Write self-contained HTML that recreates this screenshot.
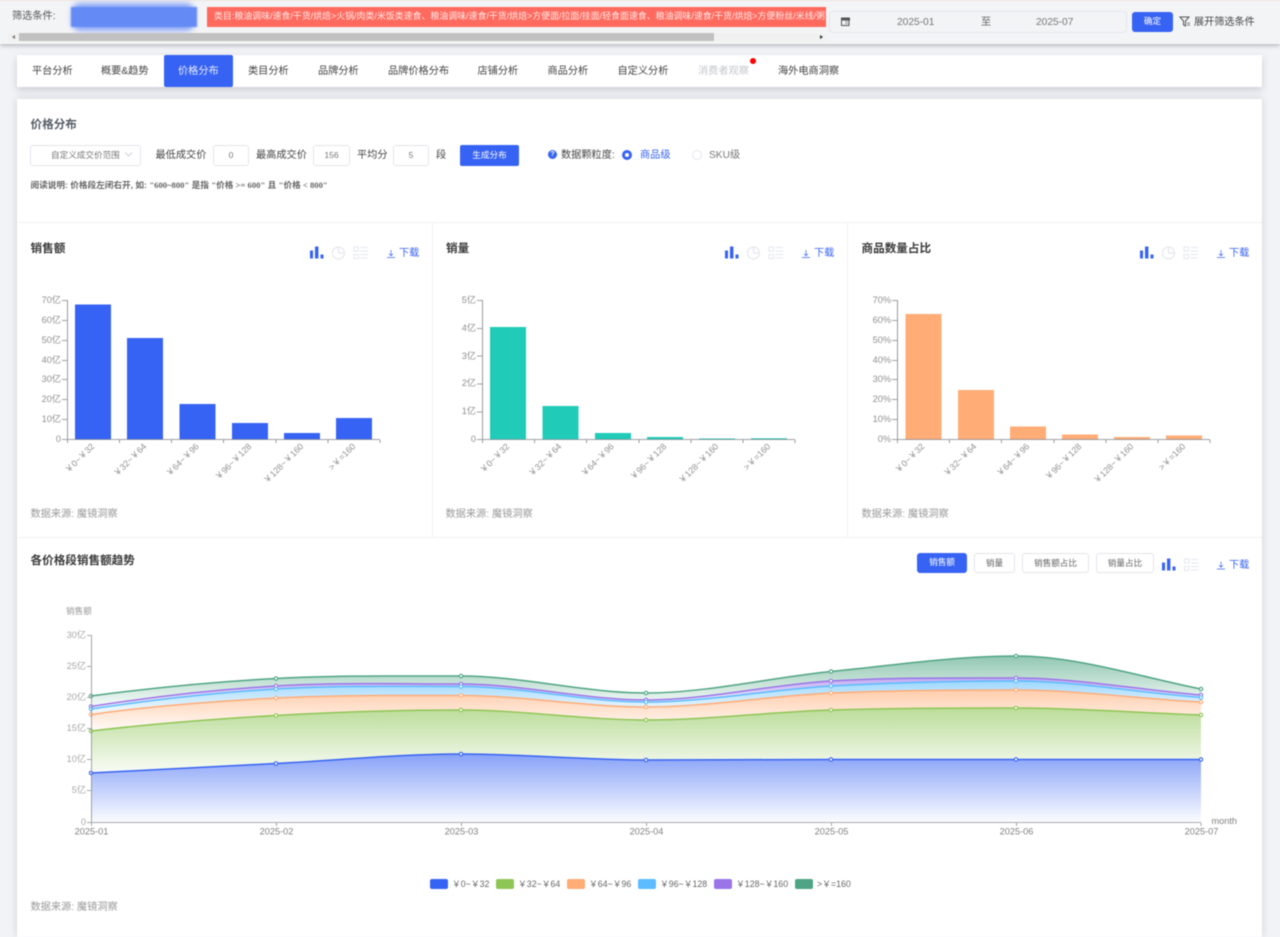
<!DOCTYPE html>
<html lang="zh">
<head>
<meta charset="utf-8">
<title>价格分布</title>
<style>
*{box-sizing:border-box;margin:0;padding:0}
html,body{width:1280px;height:937px;overflow:hidden;background:#f2f3f6;font-family:"Liberation Sans","Noto Sans CJK SC",sans-serif;color:#444}
#wrap{position:relative;width:1280px;height:937px;overflow:hidden;filter:blur(.45px)}
.a{position:absolute;white-space:nowrap}
.t{font-size:10.2px;line-height:14px}
.box{position:absolute;background:#fff;border:1px solid #e3e6ec;border-radius:3px;font-size:8.6px;color:#777;text-align:center;white-space:nowrap}
.btn{position:absolute;background:#3763f4;border-radius:2px;color:#fff;font-size:8.6px;text-align:center;white-space:nowrap}
svg{position:absolute;left:0;top:0}
svg text{font-family:"Liberation Sans","Noto Sans CJK SC",sans-serif}
</style>
</head>
<body>
<div id="wrap">
<!-- top bar -->
<div class="a" style="left:0;top:0;width:1280px;height:1px;background:#f6e9e2"></div>
<div class="a" style="left:0;top:1px;width:1280px;height:43px;background:#f3f4f6;box-shadow:0 2px 4px rgba(120,125,140,.45)"></div>
<div class="a t" style="left:12px;top:10px;color:#555">筛选条件:</div>
<div class="a" style="left:72px;top:3px;width:122px;height:28px;background:#8aa6f7;filter:blur(3px);border-radius:8px"></div>
<div class="a" style="left:71px;top:7px;width:126px;height:20px;background:#638af5;filter:blur(.8px)"></div>
<div class="a" style="left:207px;top:7px;width:619px;height:20px;background:#ff6a5f;overflow:hidden;color:#ffe9e6;font-size:8.93px;line-height:19px;padding-left:7px;white-space:nowrap">类目:粮油调味/速食/干货/烘焙&gt;火锅/肉类/米饭类速食、粮油调味/速食/干货/烘焙&gt;方便面/拉面/挂面/轻食面速食、粮油调味/速食/干货/烘焙&gt;方便粉丝/米线/粥汤速食</div>
<div class="a" style="left:8px;top:33px;width:818px;height:9px;background:#f1f1f1"></div>
<div class="a" style="left:19px;top:33px;width:695px;height:8px;background:#c1c1c1"></div>
<div class="a" style="left:12px;top:35px;border-style:solid;border-width:2.5px 3px 2.5px 0;border-color:transparent #777 transparent transparent"></div>
<div class="a" style="left:820px;top:35px;border-style:solid;border-width:2.5px 0 2.5px 3px;border-color:transparent transparent transparent #333"></div>
<div class="a" style="left:829px;top:11px;width:298px;height:22px;background:#f3f4f6;border:1px solid #e3e6ec;border-radius:4px"></div>
<div class="a t" style="left:897px;top:15.5px;color:#777">2025-01</div>
<div class="a t" style="left:981px;top:15.5px;color:#666">至</div>
<div class="a t" style="left:1036px;top:15.5px;color:#777">2025-07</div>
<div class="btn" style="left:1132px;top:12px;width:41px;height:20px;line-height:19px;border-radius:3px">确定</div>
<div class="a t" style="left:1194px;top:15.5px;color:#444;font-size:10.15px">展开筛选条件</div>
<!-- nav -->
<div class="a" style="left:17px;top:55px;width:1245px;height:32px;background:#fff;box-shadow:0 3px 7px rgba(120,125,145,.32)"></div>
<div class="a" style="left:164px;top:55px;width:69px;height:32px;background:#3763f4;border-radius:2px"></div>
<div class="a t" style="left:32px;top:65px">平台分析</div>
<div class="a t" style="left:101px;top:65px">概要&amp;趋势</div>
<div class="a t" style="left:178px;top:65px;color:#e6ecff">价格分布</div>
<div class="a t" style="left:248px;top:65px">类目分析</div>
<div class="a t" style="left:318px;top:65px">品牌分析</div>
<div class="a t" style="left:388px;top:65px">品牌价格分布</div>
<div class="a t" style="left:477.5px;top:65px">店铺分析</div>
<div class="a t" style="left:547.5px;top:65px">商品分析</div>
<div class="a t" style="left:617.5px;top:65px">自定义分析</div>
<div class="a t" style="left:698px;top:65px;color:#c3c6cc">消费者观察</div>
<div class="a t" style="left:778px;top:65px">海外电商洞察</div>
<div class="a" style="left:750px;top:58px;width:6px;height:6px;border-radius:50%;background:#f00"></div>
<!-- main card -->
<div class="a" style="left:17px;top:99px;width:1245px;height:838px;background:#fff;box-shadow:0 0 7px rgba(120,125,145,.3)"></div>
<div class="a" style="left:30.5px;top:116px;font-size:11.6px;line-height:17px;font-weight:bold;color:#555c66">价格分布</div>
<div class="box" style="left:30px;top:145px;width:111px;height:21px;line-height:19px;padding-left:8px;text-align:left"><span style="margin-left:12px">自定义成交价范围</span></div>
<div class="a t" style="left:155.5px;top:149px">最低成交价</div>
<div class="box" style="left:213px;top:145px;width:36px;height:21px;line-height:19px">0</div>
<div class="a t" style="left:256px;top:149px">最高成交价</div>
<div class="box" style="left:313px;top:145px;width:37px;height:21px;line-height:19px">156</div>
<div class="a t" style="left:357px;top:149px">平均分</div>
<div class="box" style="left:393px;top:145px;width:36px;height:21px;line-height:19px">5</div>
<div class="a t" style="left:436px;top:149px">段</div>
<div class="btn" style="left:460px;top:145px;width:59px;height:21px;line-height:20px">生成分布</div>
<div class="a" style="left:548px;top:150px;width:9px;height:9px;border-radius:50%;background:#3763f4;color:#fff;font-size:7px;line-height:9px;text-align:center;font-weight:bold">?</div>
<div class="a t" style="left:561px;top:149px">数据颗粒度:</div>
<div class="a" style="left:622px;top:150px;width:10px;height:10px;border-radius:50%;border:3px solid #3763f4;background:#fff"></div>
<div class="a t" style="left:640px;top:149px;color:#3763f4">商品级</div>
<div class="a" style="left:692px;top:150px;width:10px;height:10px;border-radius:50%;border:1px solid #e3e6ec;background:#fff"></div>
<div class="a t" style="left:709px;top:149px;color:#777">SKU级</div>
<div class="a" style="left:30.5px;top:179px;font-size:8.65px;line-height:12px;color:#666;font-weight:bold">阅读说明: 价格段左闭右开, 如: <span style="font-family:'Liberation Serif','Noto Sans CJK SC',serif">"600~800"</span> 是指 <span style="font-family:'Liberation Serif','Noto Sans CJK SC',serif">"价格 &gt;= 600"</span> 且 <span style="font-family:'Liberation Serif','Noto Sans CJK SC',serif">"价格 &lt; 800"</span></div>
<!-- dividers -->
<div class="a" style="left:17px;top:222px;width:1245px;height:1px;background:#f0f1f4"></div>
<div class="a" style="left:17px;top:537px;width:1245px;height:1px;background:#f0f1f4"></div>
<div class="a" style="left:432px;top:222px;width:1px;height:315px;background:#f0f1f4"></div>
<div class="a" style="left:847px;top:222px;width:1px;height:315px;background:#f0f1f4"></div>
<!-- headers -->
<div class="a" style="left:30.5px;top:241px;font-size:11.6px;line-height:16px;font-weight:bold;color:#3a3a3a">销售额</div>
<div class="a" style="left:446px;top:241px;font-size:11.6px;line-height:16px;font-weight:bold;color:#3a3a3a">销量</div>
<div class="a" style="left:861.5px;top:241px;font-size:11.6px;line-height:16px;font-weight:bold;color:#3a3a3a">商品数量占比</div>
<div class="a t" style="left:399px;top:247px;color:#3763f4">下载</div>
<div class="a t" style="left:814px;top:247px;color:#3763f4">下载</div>
<div class="a t" style="left:1229px;top:247px;color:#3763f4">下载</div>
<div class="a t" style="left:30.5px;top:507.5px;color:#999">数据来源: 魔镜洞察</div>
<div class="a t" style="left:445.5px;top:507.5px;color:#999">数据来源: 魔镜洞察</div>
<div class="a t" style="left:861.5px;top:507.5px;color:#999">数据来源: 魔镜洞察</div>
<div class="a" style="left:30.5px;top:553px;font-size:11.6px;line-height:16px;font-weight:bold;color:#3a3a3a">各价格段销售额趋势</div>
<div class="btn" style="left:917px;top:553px;width:50px;height:20px;line-height:19px;border-radius:3px">销售额</div>
<div class="box" style="left:974px;top:553px;width:41px;height:20px;line-height:18px;color:#666">销量</div>
<div class="box" style="left:1022px;top:553px;width:67px;height:20px;line-height:18px;color:#666">销售额占比</div>
<div class="box" style="left:1096px;top:553px;width:58px;height:20px;line-height:18px;color:#666">销量占比</div>
<div class="a t" style="left:1229px;top:558.5px;color:#3763f4">下载</div>
<div class="a t" style="left:30.5px;top:901px;color:#999">数据来源: 魔镜洞察</div>

<svg width="1280" height="937" viewBox="0 0 1280 937">
<defs>
<g id="bars" fill="#3763f4"><rect x="0" y="4" width="3" height="8"/><rect x="5" y="0" width="3.4" height="12"/><rect x="10.5" y="8" width="3" height="4"/></g>
<g id="pie" fill="none" stroke="#e5e7ee" stroke-width="1.2"><circle cx="6.5" cy="6.5" r="6"/><path d="M6.5 .5V6.5H12.5"/></g>
<g id="list" fill="none" stroke="#e5e7ee" stroke-width="1"><rect x=".5" y=".5" width="4.5" height="4"/><rect x=".5" y="8" width="4.5" height="4"/><path d="M7 1H14.5M7 4.5H14.5M7 8H14.5M7 11.5H14.5"/></g>
<g id="dl" fill="none" stroke="#3763f4" stroke-width=".7"><path d="M4 0V5.5M2 3.8L4 5.8L6 3.8M0 7.5H8"/></g>
<path id="a6" d="M91,696 C151,688 216,681.7 276,678.5 S401,676 461,676 S586,693 646,693 S771,677.5 831,671.5 S956,656 1016,656 S1141,677 1201,689 V822 H91Z"/>
<path id="a5" d="M91,706.5 C151,697 216,689.6 276,686 S401,684 461,684 S586,700 646,700 S771,684.6 831,681 S956,678 1016,678 S1141,690 1201,695 V822 H91Z"/>
<path id="a4" d="M91,709 C151,700 216,692.6 276,689 S401,686.5 461,686.5 S586,702 646,702 S771,689.4 831,686 S956,681 1016,681 S1141,693 1201,697.5 V822 H91Z"/>
<path id="a3" d="M91,714.5 C151,706 216,701.1 276,698 S401,695.5 461,695.5 S586,707 646,707 S771,695.8 831,693 S956,690 1016,690 S1141,699 1201,702 V822 H91Z"/>
<path id="a2" d="M91,731 C151,724 216,718.9 276,715.5 S401,710 461,710 S586,720 646,720 S771,711.9 831,710 S956,708 1016,708 S1141,713 1201,715 V822 H91Z"/>
<path id="a1" d="M91,773 C151,770 216,766.6 276,763.5 S401,754 461,754 S586,760 646,760 S771,759.5 831,759.5 S956,759.5 1016,759.5 S1141,759.5 1201,759.5 V822 H91Z"/>
<linearGradient id="g6" gradientUnits="userSpaceOnUse" x1="0" y1="656" x2="0" y2="706"><stop offset="0" stop-color="#4fa583" stop-opacity=".62"/><stop offset="1" stop-color="#4fa583" stop-opacity=".05"/></linearGradient>
<linearGradient id="g5" gradientUnits="userSpaceOnUse" x1="0" y1="678" x2="0" y2="709"><stop offset="0" stop-color="#9a75e8" stop-opacity=".6"/><stop offset="1" stop-color="#9a75e8" stop-opacity=".05"/></linearGradient>
<linearGradient id="g4" gradientUnits="userSpaceOnUse" x1="0" y1="681" x2="0" y2="714"><stop offset="0" stop-color="#5cbcff" stop-opacity=".6"/><stop offset="1" stop-color="#5cbcff" stop-opacity=".05"/></linearGradient>
<linearGradient id="g3" gradientUnits="userSpaceOnUse" x1="0" y1="690" x2="0" y2="731"><stop offset="0" stop-color="#ffac76" stop-opacity=".6"/><stop offset="1" stop-color="#ffac76" stop-opacity=".05"/></linearGradient>
<linearGradient id="g2" gradientUnits="userSpaceOnUse" x1="0" y1="708" x2="0" y2="773"><stop offset="0" stop-color="#8ec655" stop-opacity=".6"/><stop offset="1" stop-color="#8ec655" stop-opacity=".05"/></linearGradient>
<linearGradient id="g1" gradientUnits="userSpaceOnUse" x1="0" y1="754" x2="0" y2="822"><stop offset="0" stop-color="#3763f4" stop-opacity=".6"/><stop offset="1" stop-color="#3763f4" stop-opacity=".02"/></linearGradient>
</defs>

<!-- top icons -->
<g fill="none" stroke="#555" stroke-width="1"><rect x="841.5" y="18.5" width="7.5" height="7"/></g>
<rect x="841" y="17.5" width="9" height="3" fill="#555"/>
<path d="M845 21.5H848M845 23.5H848" stroke="#777" stroke-width=".7"/>
<path d="M1180 17H1189L1185.5 21V26L1183.5 25V21Z" fill="none" stroke="#555" stroke-width="1"/>
<path d="M1187 23H1190M1187 25H1190" stroke="#555" stroke-width=".8"/>
<path d="M125 152.5L128.5 156L132 152.5" fill="none" stroke="#c5c8d0" stroke-width=".8"/>

<!-- toolbar icons -->
<use href="#bars" x="310" y="246.5"/><use href="#pie" x="332" y="246.5"/><use href="#list" x="353.5" y="246.5"/><use href="#dl" x="387" y="250"/>
<use href="#bars" x="725" y="246.5"/><use href="#pie" x="747" y="246.5"/><use href="#list" x="768.5" y="246.5"/><use href="#dl" x="802" y="250"/>
<use href="#bars" x="1140" y="246.5"/><use href="#pie" x="1162" y="246.5"/><use href="#list" x="1183.5" y="246.5"/><use href="#dl" x="1217" y="250"/>
<use href="#bars" x="1162" y="558.5"/><use href="#list" x="1184" y="558.5"/><use href="#dl" x="1217" y="561.5"/>

<!-- chart 1 -->
<g fill="#3763f4">
<rect x="75" y="304.5" width="36" height="135"/><rect x="127" y="338" width="36" height="101.5"/><rect x="179.5" y="404" width="36" height="35.5"/><rect x="232" y="423" width="36" height="16.5"/><rect x="284" y="433" width="36" height="6.5"/><rect x="336" y="418" width="36" height="21.5"/>
</g>
<path d="M67.5 300V439.5H380M62 300.5H67M62 320.5H67M62 340.5H67M62 360.5H67M62 379.5H67M62 399.5H67M62 419.5H67M62 439.5H67M67.5 440V443M119.5 440V443M171.5 440V443M223.5 440V443M276 440V443M328 440V443M380 440V443" fill="none" stroke="#7d8189" stroke-width=".8"/>
<g font-size="9.2" fill="#909090" text-anchor="end">
<text x="61" y="303">70亿</text><text x="61" y="323">60亿</text><text x="61" y="343">50亿</text><text x="61" y="363">40亿</text><text x="61" y="382">30亿</text><text x="61" y="402">20亿</text><text x="61" y="422">10亿</text><text x="61" y="442">0</text>
</g>
<g font-size="8.8" fill="#909090" text-anchor="end">
<text transform="translate(95,447) rotate(-45)">￥0~￥32</text><text transform="translate(147,447) rotate(-45)">￥32~￥64</text><text transform="translate(199.5,447) rotate(-45)">￥64~￥96</text><text transform="translate(252,447) rotate(-45)">￥96~￥128</text><text transform="translate(304,447) rotate(-45)">￥128~￥160</text><text transform="translate(356,447) rotate(-45)">&gt;￥=160</text>
</g>

<!-- chart 2 -->
<g fill="#20ccb8">
<rect x="490" y="327" width="36" height="112.5"/><rect x="542.5" y="406" width="36" height="33.5"/><rect x="595" y="433" width="36" height="6.5"/><rect x="647" y="437" width="36" height="2.5"/><rect x="699" y="438.5" width="36" height="1"/><rect x="751" y="438.3" width="36" height="1.2"/>
</g>
<path d="M482.5 300V439.5H795M477 300.5H482M477 328.5H482M477 356H482M477 384H482M477 412H482M477 439.5H482M482.5 440V443M534.5 440V443M586.5 440V443M639 440V443M691 440V443M743 440V443M795 440V443" fill="none" stroke="#7d8189" stroke-width=".8"/>
<g font-size="9.2" fill="#909090" text-anchor="end">
<text x="476" y="303">5亿</text><text x="476" y="331">4亿</text><text x="476" y="359">3亿</text><text x="476" y="386">2亿</text><text x="476" y="414">1亿</text><text x="476" y="442">0</text>
</g>
<g font-size="8.8" fill="#909090" text-anchor="end">
<text transform="translate(510,447) rotate(-45)">￥0~￥32</text><text transform="translate(562,447) rotate(-45)">￥32~￥64</text><text transform="translate(614.5,447) rotate(-45)">￥64~￥96</text><text transform="translate(667,447) rotate(-45)">￥96~￥128</text><text transform="translate(719,447) rotate(-45)">￥128~￥160</text><text transform="translate(771,447) rotate(-45)">&gt;￥=160</text>
</g>

<!-- chart 3 -->
<g fill="#ffac76">
<rect x="905.5" y="314" width="36" height="125.5"/><rect x="958" y="390" width="36" height="49.5"/><rect x="1010" y="426.5" width="36" height="13"/><rect x="1062" y="434.5" width="36" height="5"/><rect x="1114" y="437" width="36" height="2.5"/><rect x="1166" y="435.5" width="36" height="4"/>
</g>
<path d="M897.5 300V439.5H1210M892 300.5H897M892 320.5H897M892 340.5H897M892 360.5H897M892 379.5H897M892 399.5H897M892 419.5H897M892 439.5H897M897.5 440V443M949.5 440V443M1001.5 440V443M1054 440V443M1106 440V443M1158 440V443M1210 440V443" fill="none" stroke="#7d8189" stroke-width=".8"/>
<g font-size="9.2" fill="#909090" text-anchor="end">
<text x="891" y="303">70%</text><text x="891" y="323">60%</text><text x="891" y="343">50%</text><text x="891" y="363">40%</text><text x="891" y="382">30%</text><text x="891" y="402">20%</text><text x="891" y="422">10%</text><text x="891" y="442">0%</text>
</g>
<g font-size="8.8" fill="#909090" text-anchor="end">
<text transform="translate(925,447) rotate(-45)">￥0~￥32</text><text transform="translate(977,447) rotate(-45)">￥32~￥64</text><text transform="translate(1030,447) rotate(-45)">￥64~￥96</text><text transform="translate(1082,447) rotate(-45)">￥96~￥128</text><text transform="translate(1134,447) rotate(-45)">￥128~￥160</text><text transform="translate(1186,447) rotate(-45)">&gt;￥=160</text>
</g>

<!-- area chart -->
<use href="#a6" fill="#fff"/><use href="#a6" fill="url(#g6)"/>
<use href="#a5" fill="#fff"/><use href="#a5" fill="url(#g5)"/>
<use href="#a4" fill="#fff"/><use href="#a4" fill="url(#g4)"/>
<use href="#a3" fill="#fff"/><use href="#a3" fill="url(#g3)"/>
<use href="#a2" fill="#fff"/><use href="#a2" fill="url(#g2)"/>
<use href="#a1" fill="#fff"/><use href="#a1" fill="url(#g1)"/>
<g fill="none" stroke-width="1.5">
<path stroke="#4fa583" d="M91,696 C151,688 216,681.7 276,678.5 S401,676 461,676 S586,693 646,693 S771,677.5 831,671.5 S956,656 1016,656 S1141,677 1201,689"/>
<path stroke="#9a75e8" d="M91,706.5 C151,697 216,689.6 276,686 S401,684 461,684 S586,700 646,700 S771,684.6 831,681 S956,678 1016,678 S1141,690 1201,695"/>
<path stroke="#5cbcff" d="M91,709 C151,700 216,692.6 276,689 S401,686.5 461,686.5 S586,702 646,702 S771,689.4 831,686 S956,681 1016,681 S1141,693 1201,697.5"/>
<path stroke="#ffac76" d="M91,714.5 C151,706 216,701.1 276,698 S401,695.5 461,695.5 S586,707 646,707 S771,695.8 831,693 S956,690 1016,690 S1141,699 1201,702"/>
<path stroke="#8ec655" d="M91,731 C151,724 216,718.9 276,715.5 S401,710 461,710 S586,720 646,720 S771,711.9 831,710 S956,708 1016,708 S1141,713 1201,715"/>
<path stroke="#3763f4" d="M91,773 C151,770 216,766.6 276,763.5 S401,754 461,754 S586,760 646,760 S771,759.5 831,759.5 S956,759.5 1016,759.5 S1141,759.5 1201,759.5"/>
</g>
<g fill="#fff" stroke-width="1.1">
<g stroke="#4fa583"><circle cx="91" cy="696" r="1.7"/><circle cx="276" cy="678.5" r="1.7"/><circle cx="461" cy="676" r="1.7"/><circle cx="646" cy="693" r="1.7"/><circle cx="831" cy="671.5" r="1.7"/><circle cx="1016" cy="656" r="1.7"/><circle cx="1201" cy="689" r="1.7"/></g>
<g stroke="#9a75e8"><circle cx="91" cy="706.5" r="1.7"/><circle cx="276" cy="686" r="1.7"/><circle cx="461" cy="684" r="1.7"/><circle cx="646" cy="700" r="1.7"/><circle cx="831" cy="681" r="1.7"/><circle cx="1016" cy="678" r="1.7"/><circle cx="1201" cy="695" r="1.7"/></g>
<g stroke="#5cbcff"><circle cx="91" cy="709" r="1.7"/><circle cx="276" cy="689" r="1.7"/><circle cx="461" cy="686.5" r="1.7"/><circle cx="646" cy="702" r="1.7"/><circle cx="831" cy="686" r="1.7"/><circle cx="1016" cy="681" r="1.7"/><circle cx="1201" cy="697.5" r="1.7"/></g>
<g stroke="#ffac76"><circle cx="91" cy="714.5" r="1.7"/><circle cx="276" cy="698" r="1.7"/><circle cx="461" cy="695.5" r="1.7"/><circle cx="646" cy="707" r="1.7"/><circle cx="831" cy="693" r="1.7"/><circle cx="1016" cy="690" r="1.7"/><circle cx="1201" cy="702" r="1.7"/></g>
<g stroke="#8ec655"><circle cx="91" cy="731" r="1.7"/><circle cx="276" cy="715.5" r="1.7"/><circle cx="461" cy="710" r="1.7"/><circle cx="646" cy="720" r="1.7"/><circle cx="831" cy="710" r="1.7"/><circle cx="1016" cy="708" r="1.7"/><circle cx="1201" cy="715" r="1.7"/></g>
<g stroke="#3763f4"><circle cx="91" cy="773" r="1.7"/><circle cx="276" cy="763.5" r="1.7"/><circle cx="461" cy="754" r="1.7"/><circle cx="646" cy="760" r="1.7"/><circle cx="831" cy="759.5" r="1.7"/><circle cx="1016" cy="759.5" r="1.7"/><circle cx="1201" cy="759.5" r="1.7"/></g>
</g>
<path d="M91.5 635V822.5H1201M87 635.5H91M87 666.5H91M87 697.5H91M87 728.5H91M87 759.5H91M87 790.5H91M87 822.5H91M91.5 823V826M276.5 823V826M461.5 823V826M646.5 823V826M831.5 823V826M1016.5 823V826M1201 823V826" fill="none" stroke="#8a8e96" stroke-width=".8"/>
<g font-size="9.2" fill="#a8a8a8" text-anchor="end">
<text x="86" y="638">30亿</text><text x="86" y="669">25亿</text><text x="86" y="700">20亿</text><text x="86" y="731">15亿</text><text x="86" y="762">10亿</text><text x="86" y="793">5亿</text><text x="86" y="825">0</text>
</g>
<text x="66" y="614" font-size="8.6" fill="#999">销售额</text>
<g font-size="9.2" fill="#808080" text-anchor="middle">
<text x="91.5" y="834.5">2025-01</text><text x="276.5" y="834.5">2025-02</text><text x="461.5" y="834.5">2025-03</text><text x="646.5" y="834.5">2025-04</text><text x="831.5" y="834.5">2025-05</text><text x="1016.5" y="834.5">2025-06</text><text x="1201.5" y="834.5">2025-07</text>
</g>
<text x="1211.5" y="824" font-size="9.2" fill="#808080">month</text>

<!-- legend -->
<rect x="430" y="879" width="18" height="10" rx="2" fill="#3763f4"/><text x="452" y="887" font-size="8.8" fill="#666">￥0~￥32</text>
<rect x="496" y="879" width="18" height="10" rx="2" fill="#8ec655"/><text x="518" y="887" font-size="8.8" fill="#666">￥32~￥64</text>
<rect x="567" y="879" width="18" height="10" rx="2" fill="#ffac76"/><text x="589" y="887" font-size="8.8" fill="#666">￥64~￥96</text>
<rect x="638" y="879" width="18" height="10" rx="2" fill="#5cbcff"/><text x="660" y="887" font-size="8.8" fill="#666">￥96~￥128</text>
<rect x="714" y="879" width="18" height="10" rx="2" fill="#9a75e8"/><text x="736" y="887" font-size="8.8" fill="#666">￥128~￥160</text>
<rect x="795" y="879" width="18" height="10" rx="2" fill="#4fa583"/><text x="817" y="887" font-size="8.8" fill="#666">&gt;￥=160</text>
</svg>
</div>
</body>
</html>
